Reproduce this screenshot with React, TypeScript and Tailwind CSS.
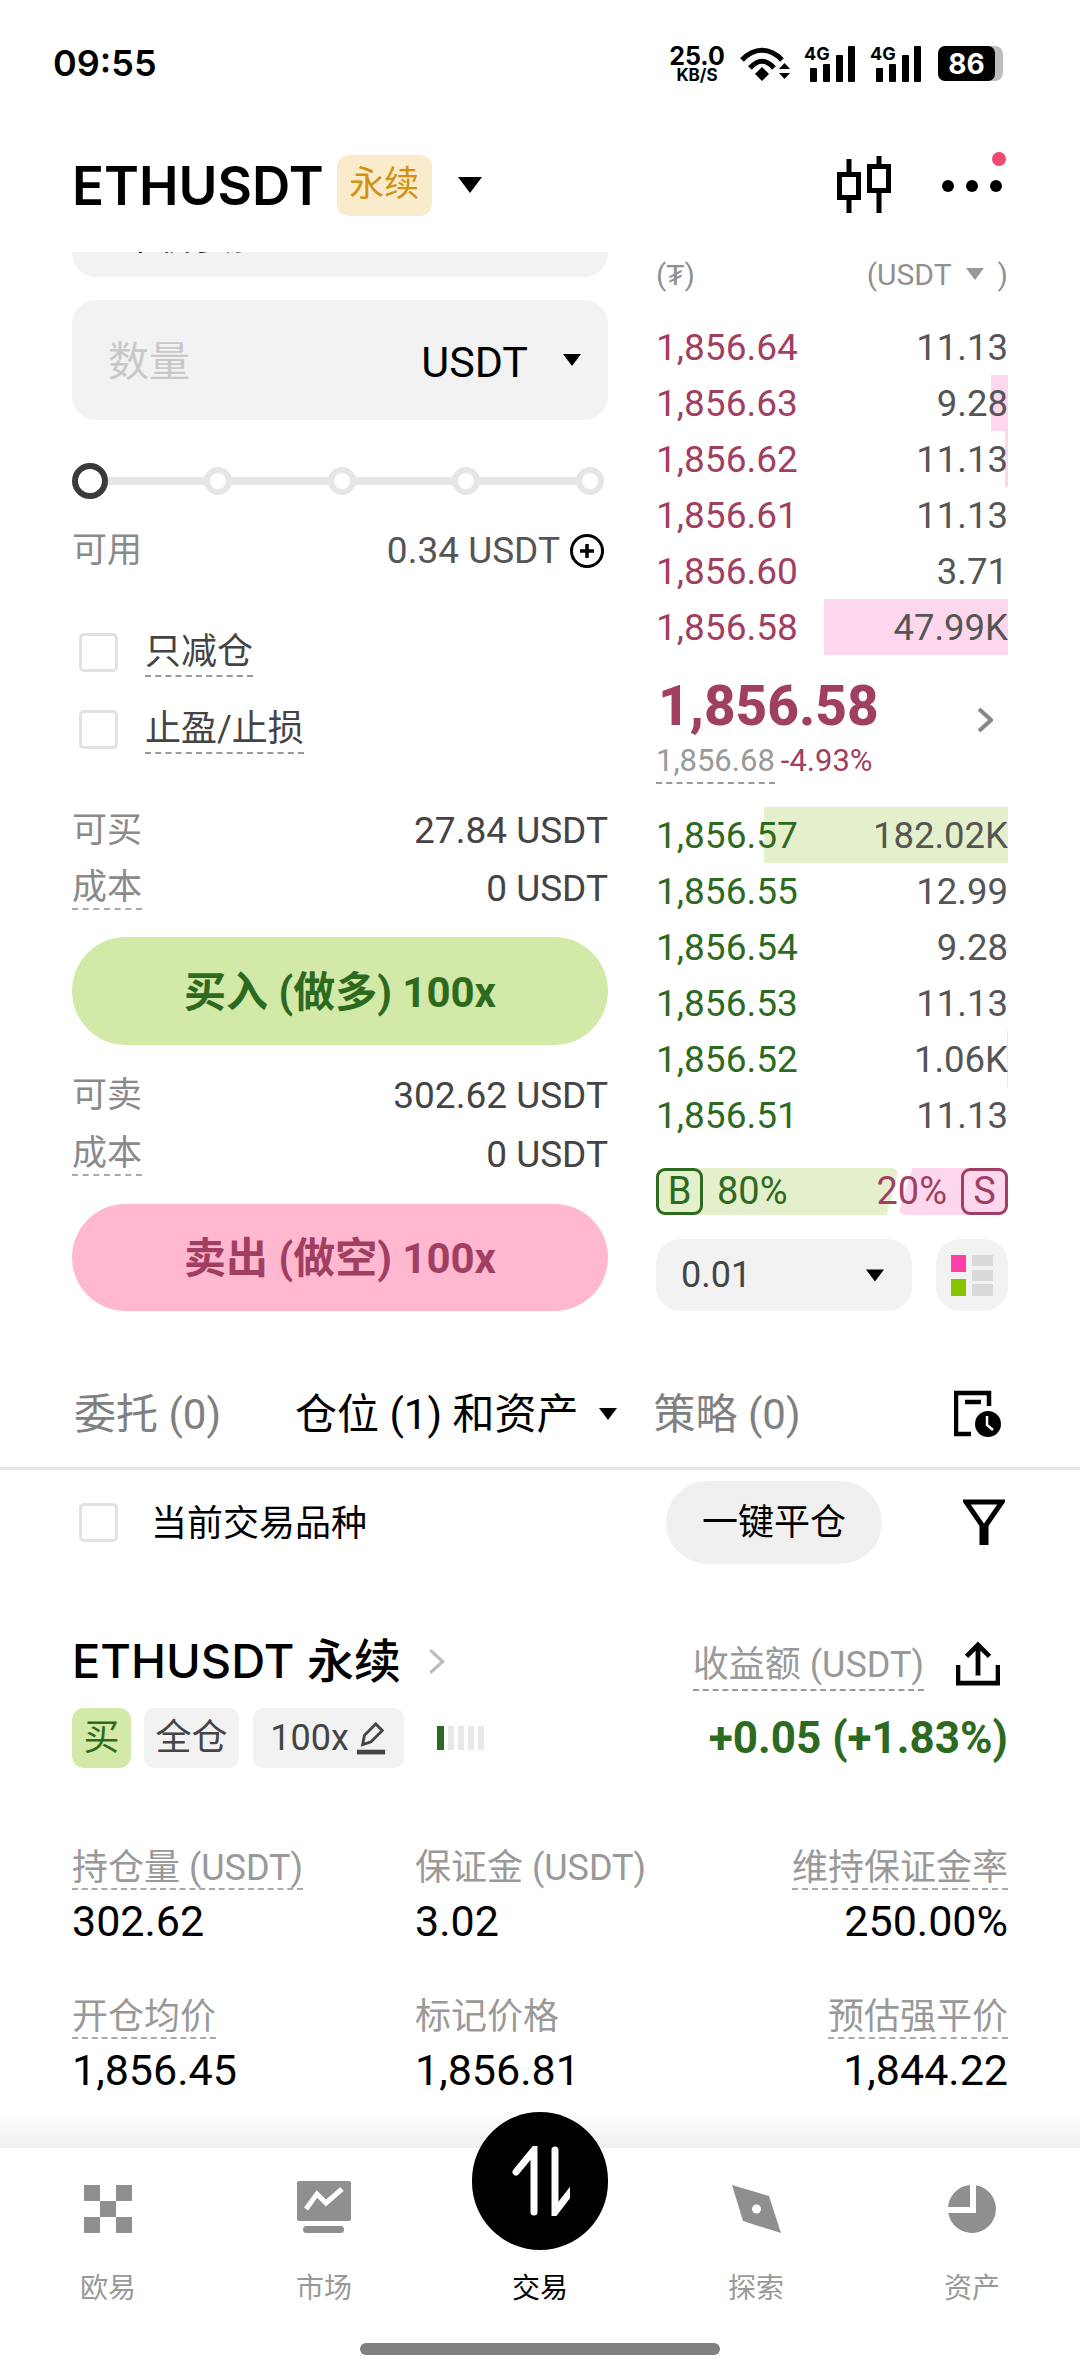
import React from 'react';

const font = { fontFamily: 'Roboto, "Noto Sans CJK SC", sans-serif' };
const inter = { fontFamily: 'Inter, "Noto Sans CJK SC", sans-serif' };

const asks = [
  { price: '1,856.64', size: '11.13', bar: 0 },
  { price: '1,856.63', size: '9.28', bar: 17 },
  { price: '1,856.62', size: '11.13', bar: 3 },
  { price: '1,856.61', size: '11.13', bar: 0 },
  { price: '1,856.60', size: '3.71', bar: 0 },
  { price: '1,856.58', size: '47.99K', bar: 184 },
];

const bids = [
  { price: '1,856.57', size: '182.02K', bar: 244 },
  { price: '1,856.55', size: '12.99', bar: 0 },
  { price: '1,856.54', size: '9.28', bar: 0 },
  { price: '1,856.53', size: '11.13', bar: 0 },
  { price: '1,856.52', size: '1.06K', bar: 1 },
  { price: '1,856.51', size: '11.13', bar: 0 },
];

const Triangle = ({ className }: { className: string }) => (
  <svg viewBox="0 0 24 16" className={className} fill="currentColor">
    <path d="M0 0H24L12 16Z" />
  </svg>
);

const Checkbox = () => (
  <div className="w-[39px] h-[39px] rounded-[5px] border-[3px] border-[#e2e2e2] bg-white shrink-0" />
);

const BookRow = ({ price, size, bar, priceColor, barColor }: { price: string; size: string; bar: number; priceColor: string; barColor: string }) => (
  <div className="relative h-[56px] pt-[2px] flex items-center justify-between">
    {bar > 0 && <div className={`absolute right-0 top-0 bottom-0 ${barColor}`} style={{ width: bar }} />}
    <span className={`relative text-[37px] ${priceColor}`}>{price}</span>
    <span className="relative text-[36.500px] text-[#555]">{size}</span>
  </div>
);

const InfoRow = ({ label, value, dashed }: { label: string; value: string; dashed?: boolean }) => (
  <div className="h-[44px] flex items-center justify-between">
    <span className={`leading-[40px] text-[35px] text-[#8a8a8a] ${dashed ? 'border-b-2 border-dashed border-[#aaa]' : ''}`}>{label}</span>
    <span className="text-[37px] text-[#444]">{value}</span>
  </div>
);

const Stat = ({ label, value, dashed, right }: { label: string; value: string; dashed?: boolean; right?: boolean }) => (
  <div className={`flex flex-col ${right ? 'items-end' : 'items-start'}`}>
    <span className={`h-[47px] leading-[50px] text-[36px] text-[#999] ${dashed ? 'border-b-2 border-dashed border-[#aaa]' : ''}`}>{label}</span>
    <span className="mt-[8px] h-[46px] leading-[46px] text-[43px] text-black">{value}</span>
  </div>
);

const StatusIcons = () => (
  <div className="flex items-center">
    <div className="w-[56px] flex flex-col items-center font-bold text-black" style={{ fontFamily: 'Inter, sans-serif' }}>
      <span className="text-[25px] leading-[23px]">25.0</span>
      <span className="text-[17px] leading-[14px]">KB/S</span>
    </div>
    <svg viewBox="0 0 50 36" className="w-[50px] h-[36px] ml-[15px]">
      <path d="M2 14C14 1 30 1 42 14" fill="none" stroke="black" strokeWidth="5" />
      <path d="M10 22C18 13 26 13 34 22" fill="none" stroke="black" strokeWidth="5" />
      <path d="M15 28L22 21L29 28L22 35Z" fill="black" />
      <path d="M39 23H50L44.500 17ZM39 27H50L44.500 33Z" fill="black" />
    </svg>
    {[0, 1].map((i) => (
      <div key={i} className={`relative w-[51px] h-[36px] ${i === 0 ? 'ml-[14px]' : 'ml-[15px]'}`}>
        <span className="absolute left-0 top-[-2px] text-[18px] leading-[20px] font-bold text-black" style={{ fontFamily: 'Inter, sans-serif' }}>4G</span>
        <svg viewBox="0 0 51 36" className="w-[51px] h-[36px]">
          <rect x="6" y="22" width="7" height="14" rx="1" />
          <rect x="19" y="18" width="7" height="18" rx="1" />
          <rect x="32" y="9" width="7" height="27" rx="1" />
          <rect x="44" y="0" width="7" height="36" rx="1" />
        </svg>
      </div>
    ))}
    <div className="relative ml-[17px] w-[65px] h-[35px]">
      <div className="absolute right-0 top-0 bottom-0 w-[16px] rounded-r-[8px] bg-[#bdbdbd]" />
      <div className="absolute left-0 top-0 bottom-0 w-[57px] rounded-[7px] bg-black flex items-center justify-center text-white text-[28px] font-bold" style={{ fontFamily: 'Inter, sans-serif' }}>86</div>
    </div>
  </div>
);

const NavItem = ({ label, active, children }: { label: string; active?: boolean; children?: React.ReactNode }) => (
  <div className="flex flex-col items-center">
    <div className="h-[52px] mt-[33px] flex items-end">{children}</div>
    <span className={`mt-[38px] text-[28px] leading-[36px] ${active ? 'text-black' : 'text-[#999]'}`}>{label}</span>
  </div>
);

export default function App() {
  return (
    <div className="relative w-[1080px] h-[2376px] bg-white overflow-hidden flex flex-col" style={font}>
      {/* Status bar */}
      <div className="h-[127px] shrink-0 flex items-start justify-between pl-[53px] pr-[77px] pt-[45px]">
        <span className="text-[36px] leading-[36px] font-semibold text-black" style={{ fontFamily: 'Inter, sans-serif' }}>09:55</span>
        <StatusIcons />
      </div>

      {/* Header */}
      <div className="relative h-[125px] shrink-0 flex items-start pl-[72px]">
        <span className="mt-[27px] text-[53px] leading-[64px] font-semibold text-black" style={{ fontFamily: 'Inter, sans-serif' }}>ETHUSDT</span>
        <span className="mt-[28px] ml-[13px] w-[95px] h-[61px] rounded-[12px] bg-[#faebcd] text-[#d2920f] text-[35px] flex items-center justify-center">永续</span>
        <Triangle className="mt-[50px] ml-[26px] w-[24px] h-[16px] text-black" />
        <svg viewBox="0 0 60 60" className="absolute left-[834px] top-[27px] w-[60px] h-[60px]" fill="none" stroke="black" strokeWidth="5">
          <path d="M15 5V59M45 2V59" />
          <rect x="5.500" y="20.500" width="19" height="23" fill="white" />
          <rect x="35.500" y="12.500" width="19" height="24" fill="white" />
        </svg>
        <div className="absolute left-[942px] top-[53px] flex gap-[12px]">
          <span className="w-[12px] h-[12px] rounded-full bg-black" />
          <span className="w-[12px] h-[12px] rounded-full bg-black" />
          <span className="w-[12px] h-[12px] rounded-full bg-black" />
        </div>
        <span className="absolute left-[992px] top-[25px] w-[14px] h-[14px] rounded-full bg-[#ef4a6f]" />
      </div>

      {/* Scrollable content */}
      <div className="flex-1 min-h-0 overflow-hidden">
        <div className="flex pl-[72px]">
          {/* Order form */}
          <div className="w-[536px] shrink-0">
            <div className="relative h-[25px] overflow-hidden rounded-b-[24px] bg-[#f2f2f2]">
              <span className="absolute left-[50px] top-[-39px] text-[37px] leading-[50px] text-black">市价委托</span>
            </div>
            <div className="mt-[23px] h-[120px] pt-[5px] rounded-[24px] bg-[#f2f2f2] flex items-center pl-[36px] pr-[27px]">
              <span className="text-[41px] text-[#c8c8c8]">数量</span>
              <span className="ml-auto text-[43px] text-black">USDT</span>
              <Triangle className="ml-[35px] mb-[5px] w-[18px] h-[12px] text-black" />
            </div>

            <div className="relative mt-[43px] h-[36px]">
              <div className="absolute left-[18px] right-[8px] top-[14px] h-[8px] bg-[#e6e6e6]" />
              <div className="relative h-full flex items-center justify-between pr-[4px]">
                <span className="w-[36px] h-[36px] rounded-full border-[6px] border-[#3a3a3a] bg-white" />
                {[0, 1, 2, 3].map((i) => (
                  <span key={i} className="w-[28px] h-[28px] rounded-full border-[6px] border-[#e6e6e6] bg-white" />
                ))}
              </div>
            </div>

            <div className="mt-[27px] h-[50px] flex items-center">
              <span className="text-[35px] text-[#8a8a8a]">可用</span>
              <span className="ml-auto text-[37px] text-[#555]">0.34 USDT</span>
              <svg viewBox="0 0 36 36" className="ml-[9px] mr-[3px] w-[36px] h-[36px]" fill="none" stroke="black">
                <circle cx="18" cy="18" r="15.500" strokeWidth="3" />
                <path d="M11 18H25M18 11V25" strokeWidth="3.500" />
              </svg>
            </div>

            <div className="mt-[51px] h-[50px] flex items-center pl-[7px]">
              <Checkbox />
              <span className="ml-[27px] h-[50px] leading-[50px] text-[36px] text-[#444] border-b-2 border-dashed border-[#999]">只减仓</span>
            </div>
            <div className="mt-[27px] h-[50px] flex items-center pl-[7px]">
              <Checkbox />
              <span className="ml-[27px] h-[50px] leading-[50px] text-[36px] text-[#444] border-b-2 border-dashed border-[#999]">止盈/止损</span>
            </div>

            <div className="mt-[55px]"><InfoRow label="可买" value="27.84 USDT" /></div>
            <div className="mt-[14px]"><InfoRow label="成本" value="0 USDT" dashed /></div>
            <div className="mt-[26px] h-[108px] pt-[2px] rounded-full bg-[#d3e9a8] flex items-center justify-center text-[42px] font-bold text-[#2d6a1f]">买入 (做多) 100x</div>
            <div className="mt-[29px]"><InfoRow label="可卖" value="302.62 USDT" /></div>
            <div className="mt-[15px]"><InfoRow label="成本" value="0 USDT" dashed /></div>
            <div className="mt-[27px] h-[107px] pt-[2px] rounded-full bg-[#ffb8cf] flex items-center justify-center text-[42px] font-bold text-[#a13f62]">卖出 (做空) 100x</div>
          </div>

          {/* Order book */}
          <div className="w-[352px] ml-[48px] shrink-0">
            <div className="h-[44px] flex items-center justify-between text-[30px] text-[#909090]">
              <span>(₮)</span>
              <span className="flex items-center">
                (USDT
                <Triangle className="ml-[14px] mr-[14px] w-[18px] h-[12px] text-[#999]" />
                )
              </span>
            </div>
            <div className="mt-[23px]">
              {asks.map((r) => (
                <BookRow key={r.price} {...r} priceColor="text-[#a13f62]" barColor="bg-[#fcd7ee]" />
              ))}
            </div>
            <div className="h-[152px] relative">
              <div className="absolute left-[2px] top-[19px] text-[55px] leading-[64px] font-extrabold text-[#a13f62]">1,856.58</div>
              <svg viewBox="0 0 16 26" className="absolute left-[321px] top-[52px] w-[16px] h-[26px]" fill="none" stroke="#888" strokeWidth="4">
                <path d="M2 2L14 13L2 24" />
              </svg>
              <div className="absolute left-0 top-[88px] flex items-start text-[31px] leading-[36px]">
                <span className="h-[41px] text-[#999] border-b-2 border-dashed border-[#999]">1,856.68</span>
                <span className="ml-[6px] text-[#a13f62]">-4.93%</span>
              </div>
            </div>
            <div>
              {bids.map((r) => (
                <BookRow key={r.price} {...r} priceColor="text-[#2d6a1f]" barColor="bg-[#e4f0cb]" />
              ))}
            </div>

            <div className="relative mt-[25px] h-[47px] text-[38px]">
              <div className="absolute left-0 top-0 bottom-0 w-[243px] bg-[#e4f0cb] rounded-[8px] [clip-path:polygon(0_0,100%_0,95%_100%,0_100%)]" />
              <div className="absolute right-0 top-0 bottom-0 w-[110px] bg-[#fcd7ee] rounded-[8px] [clip-path:polygon(13%_0,100%_0,100%_100%,0_100%)]" />
              <div className="relative h-full flex items-center">
                <span className="w-[47px] h-[47px] rounded-[9px] border-[3px] border-[#2d6a1f] text-[#2d6a1f] flex items-center justify-center">B</span>
                <span className="ml-[14px] text-[#2d6a1f]">80%</span>
                <span className="ml-auto text-[#a13f62]">20%</span>
                <span className="ml-[14px] w-[47px] h-[47px] rounded-[9px] border-[3px] border-[#a13f62] text-[#a13f62] flex items-center justify-center">S</span>
              </div>
            </div>

            <div className="mt-[24px] flex justify-between">
              <div className="w-[256px] h-[72px] rounded-[24px] bg-[#f2f2f2] flex items-center justify-between pl-[25px] pr-[28px] text-[36px] text-[#444]">
                <span>0.01</span>
                <Triangle className="w-[18px] h-[13px] text-black" />
              </div>
              <div className="w-[72px] h-[72px] rounded-[24px] bg-[#f2f2f2] flex items-center justify-center">
                <svg viewBox="0 0 42 41" className="w-[42px] h-[41px]">
                  <rect width="15" height="17" fill="#ff3fa8" />
                  <rect y="24" width="15" height="17" fill="#84c400" />
                  <rect x="21" width="21" height="11" fill="#d9d9d9" />
                  <rect x="21" y="15" width="21" height="11" fill="#d9d9d9" />
                  <rect x="21" y="29" width="21" height="12" fill="#d9d9d9" />
                </svg>
              </div>
            </div>
          </div>
        </div>

        {/* Tabs */}
        <div className="h-[156px] pt-[50px] flex items-center pl-[74px] pr-[76px] text-[42px]">
          <span className="text-[#808080]">委托 (0)</span>
          <span className="ml-[74px] text-black">仓位 (1) 和资产</span>
          <Triangle className="ml-[21px] w-[18px] h-[12px] text-black" />
          <span className="ml-[36px] text-[#808080]">策略 (0)</span>
          <svg viewBox="0 0 50 48" className="ml-auto w-[50px] h-[48px]" fill="none" stroke="black">
            <path d="M35 16V3H2V44H17" strokeWidth="4.500" />
            <path d="M11 12H27" strokeWidth="4.500" />
            <circle cx="34" cy="34" r="13" fill="black" stroke="none" />
            <path d="M33 26V35L39 40" stroke="white" strokeWidth="2.500" />
          </svg>
        </div>
        <div className="h-[3px] bg-[#e8e8e8]" />

        {/* Filter row */}
        <div className="mt-[11px] h-[83px] flex items-center pl-[79px]">
          <Checkbox />
          <span className="ml-[33px] pt-[3px] text-[36px] text-black">当前交易品种</span>
          <span className="ml-[299px] w-[216px] h-[83px] rounded-full bg-[#f0f0f0] flex items-center justify-center text-[36px] text-black">一键平仓</span>
          <svg viewBox="0 0 42 48" className="ml-[81px] w-[42px] h-[48px]" fill="none" stroke="black">
            <path d="M3 3H39L21 29Z" strokeWidth="5" />
            <path d="M21 26V46" strokeWidth="9" />
          </svg>
        </div>

        {/* Position card */}
        <div className="px-[72px] mt-[72px]">
          <div className="h-[50px] flex items-center">
            <span className="text-[47px] leading-[50px] font-medium text-black" style={inter}>ETHUSDT 永续</span>
            <svg viewBox="0 0 16 26" className="ml-[27px] w-[17px] h-[27px]" fill="none" stroke="#bbb" strokeWidth="3">
              <path d="M2 2L14 13L2 24" />
            </svg>
            <span className="ml-auto mt-[5px] h-[54px] leading-[56px] text-[36px] text-[#999] border-b-2 border-dashed border-[#999]">收益额 (USDT)</span>
            <svg viewBox="0 0 46 46" className="ml-[32px] mr-[8px] mt-[5px] w-[44px] h-[46px]" fill="none" stroke="black" strokeWidth="5">
              <path d="M2 24V43H44V24" />
              <path d="M23 35V4M11 15L23 3L35 15" />
            </svg>
          </div>
          <div className="mt-[22px] h-[60px] flex items-center text-[36px] text-[#444]">
            <span className="w-[59px] h-[60px] rounded-[12px] bg-[#d3e9a8] text-[#2d6a1f] flex items-center justify-center">买</span>
            <span className="ml-[13px] w-[95px] h-[60px] rounded-[10px] bg-[#f2f2f2] flex items-center justify-center">全仓</span>
            <span className="ml-[14px] w-[151px] h-[60px] rounded-[10px] bg-[#f2f2f2] flex items-center justify-center gap-[8px]">
              100x
              <svg viewBox="0 0 32 36" className="w-[30px] h-[34px]" fill="none" stroke="#444" strokeWidth="3">
                <path d="M6 25L8 15L20 3L27 10L15 22Z" />
                <path d="M0 33H30" strokeWidth="5" />
              </svg>
            </span>
            <div className="ml-[33px] flex gap-[4px] h-[24px]">
              <span className="w-[7px] bg-[#2d6a1f]" />
              <span className="w-[6px] bg-[#e8e8e8]" />
              <span className="w-[6px] bg-[#e8e8e8]" />
              <span className="w-[6px] bg-[#e8e8e8]" />
              <span className="w-[6px] bg-[#e8e8e8]" />
            </div>
            <span className="ml-auto text-[44px] font-bold text-[#2d6a1f]">+0.05 (+1.83%)</span>
          </div>

          <div className="mt-[75px] grid grid-cols-[343px_1fr_auto] gap-y-[48px]">
            <Stat label="持仓量 (USDT)" value="302.62" dashed />
            <Stat label="保证金 (USDT)" value="3.02" />
            <Stat label="维持保证金率" value="250.00%" dashed right />
            <Stat label="开仓均价" value="1,856.45" dashed />
            <Stat label="标记价格" value="1,856.81" />
            <Stat label="预估强平价" value="1,844.22" dashed right />
          </div>
        </div>
      </div>

      {/* Bottom nav */}
      <div className="relative h-[228px] shrink-0 bg-white">
        <div className="absolute left-0 right-0 top-[-38px] h-[38px] bg-gradient-to-b from-white to-[#efefef]" />
        <div className="grid grid-cols-5">
          <NavItem label="欧易">
            <svg viewBox="0 0 48 48" className="w-[48px] h-[48px]" fill="#8f8f8f">
              <rect width="16" height="16" />
              <rect x="32" width="16" height="16" />
              <rect x="16" y="16" width="16" height="16" />
              <rect y="32" width="16" height="16" />
              <rect x="32" y="32" width="16" height="16" />
            </svg>
          </NavItem>
          <NavItem label="市场">
            <svg viewBox="0 0 54 52" className="w-[54px] h-[52px]">
              <rect width="54" height="40" rx="2" fill="#8f8f8f" />
              <path d="M9 28L20 13L29 22L45 8" fill="none" stroke="white" strokeWidth="5" />
              <rect x="6" y="45" width="41" height="7" rx="3.500" fill="#8f8f8f" />
            </svg>
          </NavItem>
          <NavItem label="交易" active />
          <NavItem label="探索">
            <svg viewBox="0 0 49 48" className="w-[49px] h-[48px]">
              <path d="M0 0L37 11L49 48L11 36Z" fill="#8f8f8f" />
              <circle cx="24.500" cy="24" r="4.500" fill="white" />
            </svg>
          </NavItem>
          <NavItem label="资产">
            <svg viewBox="0 0 48 48" className="w-[48px] h-[48px]" fill="#8f8f8f">
              <path d="M22 .1V22H.1A24 24 0 0 1 22 .1Z" />
              <path d="M28 .3A24 24 0 1 1 .3 28H28Z" />
            </svg>
          </NavItem>
        </div>
        <div className="absolute left-[472px] top-[-36px] w-[136px] h-[138px] rounded-full bg-black flex items-center justify-center">
          <svg viewBox="0 0 60 70" className="w-[60px] h-[70px]" fill="none" stroke="white" strokeWidth="7" strokeLinecap="round">
            <path d="M24 66V4L6 26" />
            <path d="M45 4V66L62 44" />
          </svg>
        </div>
        <div className="absolute left-[360px] top-[195px] w-[360px] h-[12px] rounded-full bg-[#808080]" />
      </div>
    </div>
  );
}
